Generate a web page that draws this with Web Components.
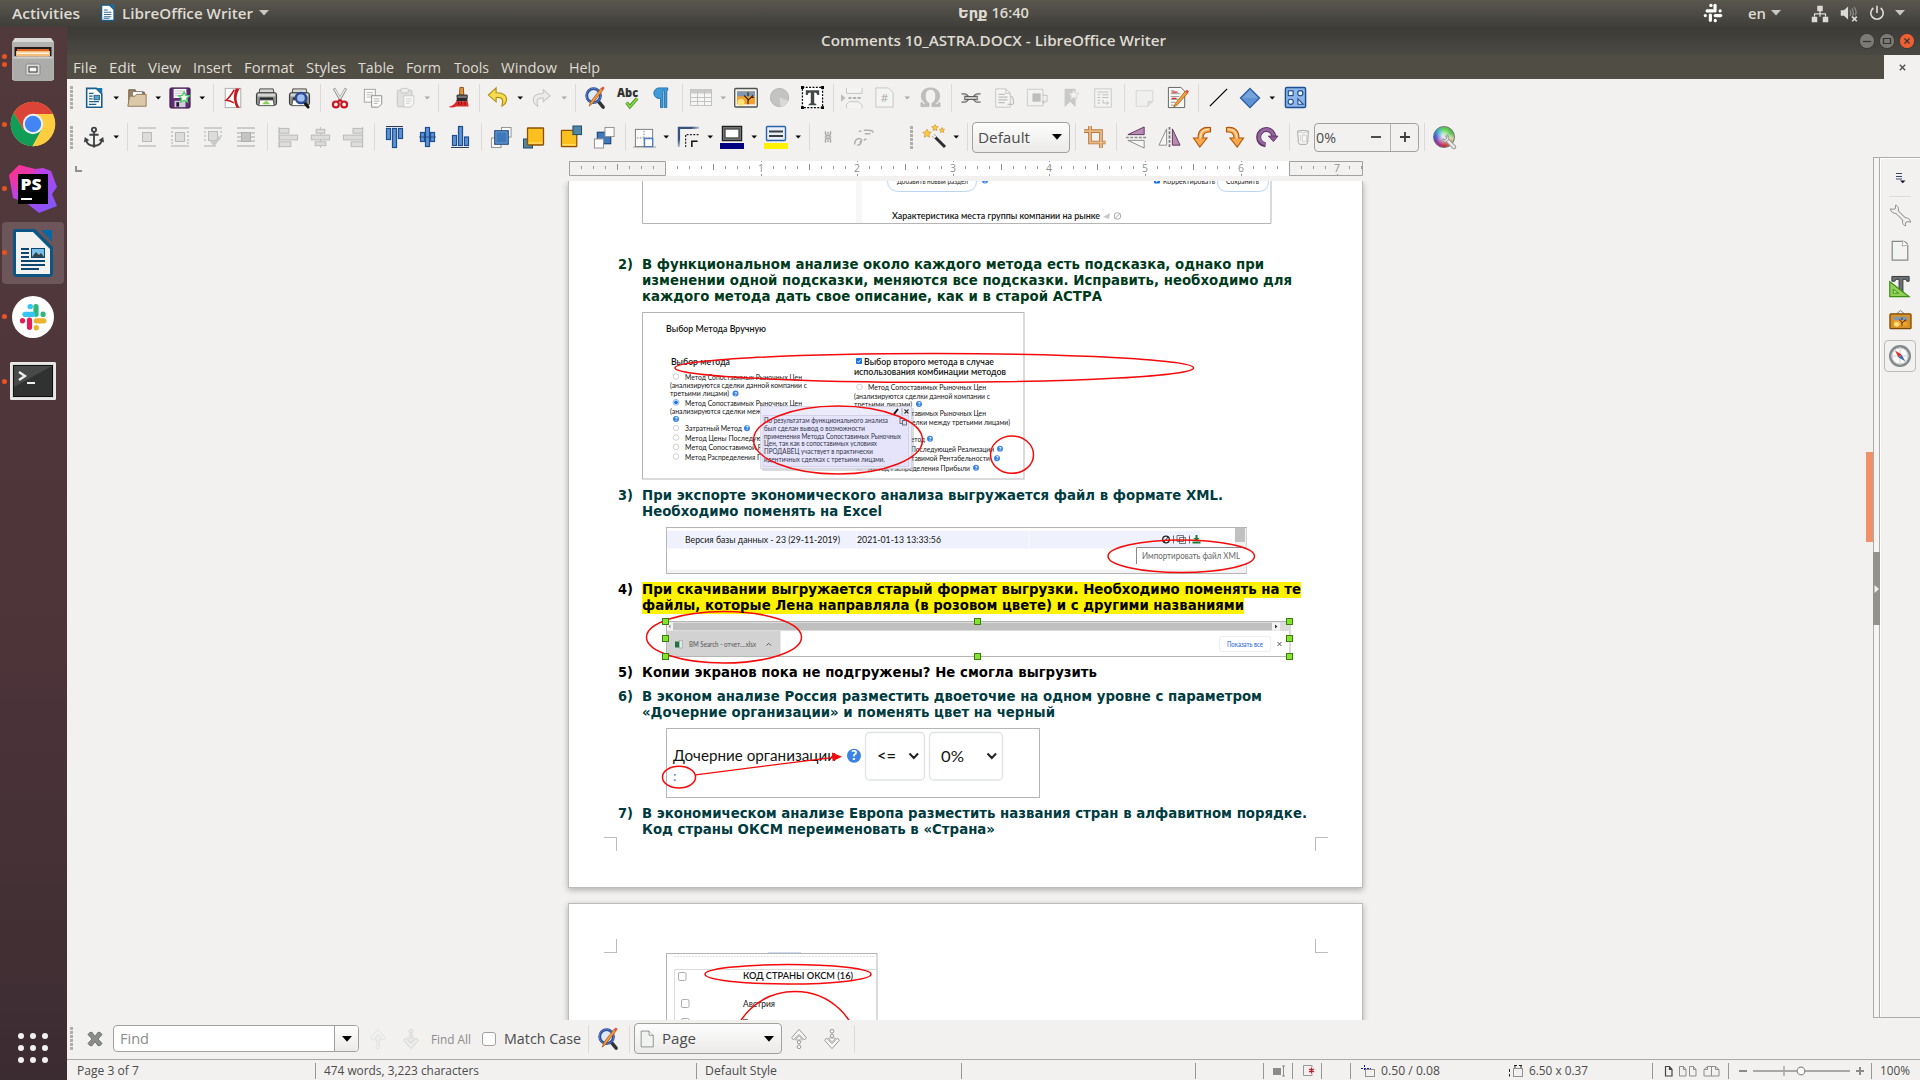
<!DOCTYPE html>
<html lang="en">
<head>
<meta charset="utf-8">
<title>Comments 10_ASTRA.DOCX - LibreOffice Writer</title>
<style>
html,body{margin:0;height:100%;overflow:hidden;background:#f2f1f0;font-family:"Open Sans","Noto Sans",sans-serif}
</style>
</head>
<body>
<desktop-shell></desktop-shell>
<script>
/* ---------- helpers ---------- */
// Lays items [start, width, markup] out in a flex row, turning starts into gaps.
const row = (items, origin = 0) => {
  let p = origin, o = '';
  for (const [x, w, html] of items) {
    o += `<div class="c" style="margin-left:${(x - p).toFixed(1)}px;width:${w}px">${html}</div>`;
    p = x + w;
  }
  return o;
};
const ROW = `.row{display:flex;align-items:center}.c{flex:none;display:flex;align-items:center;justify-content:center}`;
const txt = (x1, x2, s, style = '') => [x1, x2 - x1, `<fit-text w="${x2 - x1}" style="${style}">${s}</fit-text>`];
const ic = (cx, name, s = 24) => [cx - s / 2, s, `<ui-icon name="${name}" size="${s}"></ui-icon>`];
const sep = (x, h = 28, c = '#dcdad8') => [x, 1, `<i style="display:block;width:1px;height:${h}px;background:${c}"></i>`];
const dd = (cx, c = '#000') => [cx - 4, 8, `<svg width="8" height="6"><path d="M1.500 1.500h5.500L4.200 4.600z" fill="${c}"/></svg>`];
const handle = cx => [cx - 1.5, 3, `<i style="display:block;width:3px;height:23px;background:repeating-linear-gradient(#b0aeac 0 3px,transparent 3px 4px)"></i>`];
const T = (x1, x2, cy, s, size, extra = '') =>
  `<text x="${x1}" y="${(cy + size * .34).toFixed(1)}" font-size="${size}" textLength="${x2 - x1}" lengthAdjust="spacingAndGlyphs" ${extra}>${s}</text>`;
const E = (x1, x2, y1, y2) =>
  `<ellipse cx="${(x1 + x2) / 2}" cy="${(y1 + y2) / 2}" rx="${(x2 - x1) / 2}" ry="${(y2 - y1) / 2}" fill="none" stroke="#f50b0b" stroke-width="1.500"/>`;
const Q = (x, y, r = 3) =>
  `<circle cx="${x}" cy="${y}" r="${r}" fill="#3a82e4"/><text x="${x}" y="${y + r * .68}" font-size="${r * 1.9}" font-weight="900" fill="#fff" text-anchor="middle">?</text>`;
const R = (x, y, on) => on
  ? `<circle cx="${x}" cy="${y}" r="2.9" fill="#fff" stroke="#5b9df5" stroke-width=".7"/><circle cx="${x}" cy="${y}" r="1.9" fill="#1a73e8"/>`
  : `<circle cx="${x}" cy="${y}" r="2.8" fill="#fff" stroke="#bbb" stroke-width=".7"/>`;
const CB = (x, y) => `<rect x="${x - 3}" y="${y - 3}" width="6" height="6" rx="1" fill="#1573e6"/><path d="M${x - 1.7} ${y}l1.3 1.4 2.2-2.8" stroke="#fff" stroke-width=".9" fill="none"/>`;

/* ---------- icon set, 24 unit grid ---------- */
const magnify = `<path d="M15 16l5 6" stroke="#333" stroke-width="3.6" stroke-linecap="round"/><circle cx="10" cy="10" r="7.2" fill="#dfe8f5" stroke="#2b4c96" stroke-width="3"/><circle cx="10" cy="10" r="7.6" fill="none" stroke="#5c80c8" stroke-width="1"/><path d="M20 4L9 18l-3.6 3L7 16.400L17.600 2.500z" fill="#f29a3c" stroke="#a9530f" stroke-width=".8"/><path d="M17.600 2.500L20 4l1.600-2-2-1.600z" fill="#e34b3b"/>`;
const printer = `<path d="M5 3h14l1 6H4z" fill="#d6d7d4" stroke="#4a4d4a"/><rect x="1.500" y="7" width="21" height="13" rx="2" fill="#8d918d" stroke="#2e312f"/><rect x="3" y="8" width="18" height="3" fill="#d4d6d3"/><path d="M5 12h14v3H5z" fill="#2b2d2c"/><path d="M5 14.500h14l1 6H4z" fill="#fbfbfa" stroke="#555"/>`;
const blueg = `fill="#5d93d6" stroke="#1d4f92" stroke-width="1.200"`;
const gy = `fill="#dcdcda" stroke="#b9b9b7"`;
const teal = (x, y) => `<rect x="${x}" y="${y}" width="9" height="9" fill="#4f86a6" stroke="#1d4a66"/>`;
const orange = (x, y) => `<rect x="${x}" y="${y}" width="16" height="17" rx=".5" fill="#fcbf20" stroke="#8c5204" stroke-width="1.300"/><path d="M${x + 1.200} ${y + 15}h13.600" stroke="#ffe680"/>`;
const bluesq = `<rect x="5" y="5" width="14" height="14" fill="#3f79bb" stroke="#1c4476" stroke-width="1.200"/><rect x="6.200" y="6.200" width="11.600" height="11.600" fill="none" stroke="#79a7da" stroke-width=".8"/>`;
const white = (x, y, s = 9) => `<rect x="${x}" y="${y}" width="${s}" height="${s}" fill="#fafafa" stroke="#8f918e"/>`;
const pageG = `<path d="M4 2h11l5 5v15H4z" fill="#f4f4f2" stroke="#c4c4c1"/><path d="M15 2v5h5" fill="none" stroke="#c4c4c1"/>`;
const rot = `<path d="M20.500 2.500c-8.500-1-12.500 3-12.500 10.500H3.500L9.800 22 17 13h-4c0-4 1.800-6.500 7.500-6z" fill="#f9a94c" stroke="#b0560b" stroke-width="1.100"/><path d="M19 4.400c-5-.5-8.500 2-8.900 9" fill="none" stroke="#ffe2bd" stroke-width="1.300"/>`;
const photo = `<rect x="3" y="5" width="18" height="13" fill="#f4a12c"/><rect x="3" y="5" width="18" height="5" fill="#7f97b1"/><circle cx="7" cy="16" r="3.500" fill="#ffe37a"/><path d="M14 18v-5l-4-4m4 5l5-5m-5 1V6m3 5l3 0" stroke="#3a2409" stroke-width="1.200" fill="none"/>`;
const nav = (up, c, f) => `<g stroke="${c}" fill="${f}" ${up ? '' : 'transform="rotate(180 12 12)"'}><path d="M12 1.500l8 9-2 2.500-6-6-6 6-2-2.500z"/><path d="M12 8.500l4 4.500-4 0-4 0z" opacity=".7"/><circle cx="12" cy="15.500" r="1.800"/><circle cx="12" cy="20.500" r="2"/></g>`;
const slack = (a, b, c, d) => `<g stroke-width="5.200" stroke-linecap="round"><path d="M20.500 9.500v7.800" stroke="${b}"/><path d="M27.600 17.400v-.3" stroke="${b}"/><path d="M17.300 17.300H9.500" stroke="${a}"/><path d="M14.600 9.600h.3" stroke="${a}"/><path d="M14 23v7.300" stroke="${c}"/><path d="M7 23.600v.2" stroke="${c}"/><path d="M20.800 23.800h7.600" stroke="${d}"/><path d="M20.800 30.500v.3" stroke="${d}"/></g>`;
const ICONS = {
newdoc: `<path d="M4 1.500h10.500l6 6V22H4z" fill="#fff" stroke="#1a5e8e" stroke-width="1.700"/><path d="M15 1h6v6z" fill="#1573ae"/><path d="M6.500 7h5M6.500 10h4M6.500 13h4M6.500 16h11M6.500 19h8" stroke="#1d5f8f" stroke-width="1.200"/><rect x="12" y="9" width="6" height="5" fill="#4f9fd0" stroke="#15486e" stroke-width=".8"/>`,
folder: `<path d="M3 20V3h7l1.500 2.500H20V20z" fill="#a08460" stroke="#6e583b"/><path d="M7 5h11v6H7z" fill="#fff" stroke="#777"/><path d="M2 21l2-11h6l1.500-2H22v13z" fill="#dcc8a8" stroke="#8d7554"/>`,
save: `<rect x="1" y="1" width="22" height="22" rx="1.500" fill="#5d2c72" stroke="#32103f"/><path d="M5 2h14v10H5z" fill="#f4f4f4"/><path d="M6.500 4.500h11M6.500 7h11M6.500 9.500h6" stroke="#c9c9c9"/><path d="M6 15h12v7H6z" fill="#cfcfd3"/><path d="M8 16.500h3v5H8z" fill="#2f1440"/><path d="M16.500 5.500l1.800 3.600 4 .4-2.900 2.900.8 4-3.700-1.900-3.700 1.900.8-4-2.900-2.900 4-.4z" fill="#f2fff0" stroke="#53c96d" stroke-width="1.500"/>`,
pdf: `<rect x="3.500" y="1.500" width="17" height="21" fill="#fdfdfd" stroke="#a9a9a9"/><path d="M15 1.500h4.500C15 8 14.500 16 19.500 22.500H16C12.500 17 12 8 15 1.500z" fill="#c8171f"/><path d="M13.500 3C10.500 8 7.500 12 4.500 14.500c3.500 0 6 1 8.500 3" fill="none" stroke="#c8171f" stroke-width="1.600"/>`,
print: printer + `<path d="M8 18l4-2.500 4 3.500H8z" fill="#8bcf5c"/>`,
preview: printer + `<path d="M17 17l4 5" stroke="#111" stroke-width="3" stroke-linecap="round"/><circle cx="13.500" cy="12.500" r="5.300" fill="#9fc0ee" stroke="#2b4c96" stroke-width="2.600"/>`,
cut: `<path d="M5.500 1.500l8 14M18.500 1.500l-8 14" stroke="#8f9290" stroke-width="3"/><path d="M6 2l7 12M18 2l-7 12" stroke="#e7e9e8" stroke-width="1.400"/><circle cx="7.500" cy="19" r="3.200" fill="none" stroke="#cc1420" stroke-width="2.300"/><circle cx="16.500" cy="19" r="3.200" fill="none" stroke="#cc1420" stroke-width="2.300"/><path d="M10 16l2-2 2 2" stroke="#cc1420" stroke-width="2" fill="none"/>`,
copy: `<rect x="2.500" y="2.500" width="12" height="14" fill="#fafafa" stroke="#9d9f9c"/><path d="M5 6h7M5 8.500h7M5 11h5" stroke="#b9b9b9"/><path d="M10.500 9.500h11v9l-3.500 3.500h-7.500z" fill="#fafafa" stroke="#888a87"/><path d="M13 13h6M13 15.500h6M13 18h4" stroke="#b0b0b0"/>`,
paste: `<g opacity=".85"><rect x="2.500" y="3.500" width="16" height="18" rx="1.500" fill="#dededb" stroke="#bababa"/><rect x="6.500" y="1.500" width="8" height="5" rx="1" fill="#eee" stroke="#bdbdbb"/><path d="M9.500 9.500h11v9L17 22H9.500z" fill="#f7f7f5" stroke="#c2c2c0"/><path d="M12 13h6M12 15.500h6M12 18h4" stroke="#ccc"/></g>`,
brush: `<path d="M12.500 1.500h3.500l.5 8h-4.500z" fill="#e3973f" stroke="#8f4e10"/><path d="M9.500 9.500h10.500v3.500H9.500z" fill="#777" stroke="#222"/><path d="M9.500 13h10.500l.5 3h-12z" fill="#2b2b2b"/><path d="M8.500 16h12l1 5.500H9c-3 1-6 1.200-8.500.5 4-1 6.800-3 8-6z" fill="#dc2a2c"/><path d="M11 16l.5 4M14 16v4M17.500 16l.5 4" stroke="#7d0e12"/>`,
undo: `<path d="M9.500 2L1.500 9.500l8 7V12c5-.5 8 1 6.500 6.500-.3 1.500-.3 2.500-.3 2.500 6.500-4 7.800-14-6.200-14z" fill="#f5dc50" stroke="#b08f10" stroke-width="1.200"/>`,
redo: `<path d="M14.500 3l7.500 6.500-7.500 6.500V12c-5-.5-8 1-6.500 6.500.3 1.500.3 2.500.3 2.500C1.800 17 .5 7 14.500 7z" fill="#ebebe9" stroke="#c6c6c4" stroke-width="1.100"/>`,
find: magnify,
spell: `<text x="0" y="10.500" font-size="12.500" font-weight="800" textLength="23" lengthAdjust="spacingAndGlyphs" fill="#333" font-family="Open Sans">Abc</text><path d="M10.500 17l3.500 4.500 8-9" stroke="#3d8f14" stroke-width="3.600" fill="none"/><path d="M10.500 17l3.500 4.500 8-9" stroke="#8fdc4c" stroke-width="1.800" fill="none"/>`,
pilcrow: `<path d="M18.500 2H9.500a5.500 5.500 0 0 0 0 11H11v9.500h2.500V4.500H15v18h2.500V4.500h1z" fill="#3f9ad8" stroke="#1b6aa8" stroke-width=".9"/>`,
table: `<rect x="1.500" y="3.500" width="21" height="16" fill="#f6f6f5" stroke="#c3c3c1"/><path d="M2 5.500h20" stroke="#cacac8" stroke-width="4"/><path d="M1.500 11.500h21M1.500 15.500h21M8.500 4v15M15.500 4v15" stroke="#c3c3c1"/>`,
image: `<rect x=".7" y="2.500" width="22.600" height="18.500" rx="1" fill="#f4f4f0" stroke="#4f524f" stroke-width="1.300"/><g transform="translate(0 .3)">${photo}</g>`,
pie: `<circle cx="12" cy="12" r="9.500" fill="#c3c3c1" stroke="#b4b4b2"/><path d="M12 12l9 3.500A9.500 9.500 0 0 1 13 21.500z" fill="#d9d9d7"/>`,
textbox: `<rect x="1.500" y="1.500" width="21" height="21" fill="#fff" stroke="#000" stroke-width="1.300" stroke-dasharray="2 1.500"/><path d="M0 0h3v3H0zM21 0h3v3h-3zM0 21h3v3H0zM21 21h3v3h-3z"/><path d="M5 4.500h14v5h-2c-.5-2-1-2.700-3.200-2.700V18l2.200.8V20H8v-1.200l2.200-.8V6.800C8 6.800 7.500 7.500 7 9.500H5z" fill="#454849"/>`,
pbreak: `<path d="M6 1v6h17V1M6 23v-4l3-3h10l4 4v3" fill="#f4f4f2" stroke="#c2c2c0"/><path d="M8 12h15" stroke="#b3b3b1" stroke-width="2" stroke-dasharray="3.500 1.500"/><path d="M0 8l5 4-5 4z" fill="#bcbcba"/>`,
field: `<path d="M3 2h13l5 5v15H3z" fill="#f4f4f2" stroke="#c6c6c4"/><text x="12" y="17" font-size="12" text-anchor="middle" fill="#a7a7a5">#</text>`,
omega: `<path d="M2 21.500v-4h1.500c.3 1.300 1 1.500 2.500 1.500h2C4 16.500 2.500 14 2.500 10.500 2.500 5 6.500 2 12 2s9.500 3 9.500 8.500C21.500 14 20 16.500 16 19h2c1.500 0 2.200-.2 2.500-1.500H22v4h-8.500V18c3-1.500 4-4 4-7.500 0-4-2-7-5.500-7s-5.500 3-5.500 7c0 3.500 1 6 4 7.500v3.500z" fill="#bebebc" stroke="#adadab" stroke-width=".6"/>`,
link: `<path d="M1.500 7.500h4c2 0 3 2 5 4.500M1.500 16.500h4c2 0 3-2 5-4.500M22.500 7.500h-4c-2 0-3 2-5 4.500M22.500 16.500h-4c-2 0-3-2-5-4.500" stroke="#696b68" stroke-width="1.500" fill="none"/><path d="M4 10h5M15 10h5M4 14h5M15 14h5" stroke="#7d7f7c"/><rect x="5" y="10.500" width="14" height="3" rx="1.500" fill="#eee" stroke="#5c5e5b" stroke-width="1.100"/>`,
foot: pageG + `<path d="M7 8h7M7 11h10M7 14h10M7 17h7M17 19h4.500q2.500 0 2-3-.5-6-3.500-6" stroke="#bdbdbb" stroke-width="1.300" fill="none"/>`,
frame: `<path d="M1.500 2.500h17v18h-17z" fill="#f2f2f0" stroke="#c8c8c6"/><rect x="7" y="7" width="9" height="9" fill="#bdbdbb"/><path d="M18 9h5v7l-5 .5m2-2.500l-2 2.500 2 2" stroke="#bdbdbb" fill="none"/>`,
bookmark: `<path d="M5 2h12v20l-6-6-6 6z" fill="#c9c9c7"/><path d="M15 3l1.700 3.500 3.800.5-2.800 2.600.7 3.800-3.400-1.900-3.400 1.900.7-3.800L9.500 7l3.800-.5z" fill="#f1f1ef" stroke="#d4d4d2"/>`,
cross: `<rect x="3" y="2" width="18" height="20" fill="#f3f3f1" stroke="#c9c9c7"/><path d="M6 5.500h12M6 8.500h3M11 8.500h7M6 11.500h3M11 11.500h7M6 14.500h3M6 17.500h3M12 14v3.500h6m-2-2l2 2-2 2" stroke="#bababa" fill="none"/>`,
comment: `<path d="M3.500 4h18v12l-5 5h-13z" fill="#f0f0ee" stroke="#d5d5d3"/><path d="M21.500 16h-5v5" fill="#e0e0de" stroke="#cfcfcd"/>`,
track: `<path d="M2.500 1.500h13l4 4v17h-17z" fill="#f8f8f7" stroke="#5f625f"/><path d="M5 5h4M5 8h10M5 11h9M5 14h8M5 17h5M5 20h4" stroke="#9a9c99"/><path d="M6 6.500h6M6 13h5" stroke="#e2262b" stroke-width="1.300"/><path d="M20 5.500L10 18l-2 4 4-2.500L22.500 7.500z" fill="#f4a13c" stroke="#a35a10" stroke-width=".8"/><path d="M20 5.500l2.500 2L24 5.800l-2.300-2z" fill="#e34b3b"/>`,
line: `<path d="M3 21L21 3" stroke="#000" stroke-width="1.200"/>`,
diamond: `<path d="M12 1.500L22.500 12 12 22.500 1.500 12z" fill="#5f92d2" stroke="#24579c" stroke-width="1.200"/><path d="M12 3.500L20.500 12H3.500z" fill="#86afe0" opacity=".6"/>`,
shapes: `<rect x="1.500" y="1.500" width="21" height="21" rx="1.500" fill="#8fb6e6" stroke="#1f4f92" stroke-width="1.500"/><g fill="#e8f1fc" stroke="#1f4f92" stroke-width="1.200"><rect x="4.500" y="5" width="5" height="5"/><circle cx="17" cy="7.500" r="2.700"/><circle cx="7" cy="16.500" r="2.700"/><path d="M14.500 13.500v5.500h5.500z"/></g>`,
anchor: `<g fill="none" stroke="#3d4142" stroke-width="2"><circle cx="12" cy="4" r="2.300"/><path d="M12 6.500v15M7 9.500h10M3.500 14.500c.5 5 4 7 8.500 7s8-2 8.500-7"/></g><path d="M1 18l1-6 5 3.500zM23 18l-1-6-5 3.500zM9.500 21.500h5L12 24z" fill="#3d4142"/>`,
wrap0: `<path d="M3 3h18M3 21h18" stroke="#c2c2c0" stroke-width="1.600"/><rect x="7.500" y="7.500" width="9" height="9" ${gy}/>`,
wrap1: `<path d="M3 3h18M3 21h18" stroke="#c2c2c0" stroke-width="1.600"/><path d="M3 7h2M3 11h2M3 15h2M3 18h2M19 7h2M19 11h2M19 15h2M19 18h2" stroke="#c2c2c0" stroke-width="1.500"/><rect x="7.500" y="7.500" width="9" height="9" ${gy}/>`,
wrap2: `<path d="M3 3h18M3 21h12" stroke="#c2c2c0" stroke-width="1.600"/><path d="M3 7h2M3 11h2M3 15h2M19 7h2M19 11h2" stroke="#c2c2c0" stroke-width="1.500"/><rect x="7.500" y="6.500" width="9" height="9" ${gy}/><path d="M10 15l3 4 6-7" stroke="#c9c9c7" stroke-width="3" fill="none"/>`,
wrap3: `<path d="M3 3h18M3 8h18M3 12h18M3 16h18M3 21h18" stroke="#bfbfbd" stroke-width="1.600"/><rect x="7.500" y="7.500" width="9" height="9" fill="#c4c4c2" stroke="#b0b0ae"/>`,
al: `<path d="M3 1v22" stroke="#c2c2c0"/><rect x="3.500" y="2.500" width="10" height="5" ${gy}/><rect x="3.500" y="9.500" width="19" height="5" ${gy}/><rect x="3.500" y="16.500" width="12" height="5" ${gy}/>`,
ac: `<path d="M12 1v22" stroke="#c2c2c0"/><rect x="7.500" y="3.500" width="9" height="4" ${gy}/><rect x="2.500" y="9.500" width="19" height="5" ${gy}/><rect x="6.500" y="16.500" width="11" height="4" ${gy}/>`,
ar: `<path d="M21.500 1v22" stroke="#c2c2c0"/><rect x="11.500" y="2.500" width="10" height="5" ${gy}/><rect x="1.500" y="9.500" width="20" height="5" ${gy}/><rect x="9.500" y="16.500" width="12" height="5" ${gy}/>`,
vt: `<path d="M4 1.500h17" stroke="#2c3f5c"/><rect x="4.500" y="3.500" width="4" height="11" ${blueg}/><rect x="10.500" y="3.500" width="4" height="19" ${blueg}/><rect x="16.500" y="3.500" width="4" height="10" ${blueg}/>`,
vm: `<rect x="5.500" y="7.500" width="4" height="9" ${blueg}/><rect x="10.500" y="2.500" width="4" height="19" ${blueg}/><rect x="15.500" y="7.500" width="4" height="9" ${blueg}/><path d="M4 12h17" stroke="#1d3c6a" opacity=".7"/>`,
vb: `<path d="M3 22.500h18" stroke="#2c3f5c"/><rect x="4.500" y="10.500" width="4" height="10" ${blueg}/><rect x="10.500" y="1.500" width="4" height="19" ${blueg}/><rect x="16.500" y="12" width="4" height="8.500" ${blueg}/>`,
z1: white(12, 1.5, 10) + white(1.5, 12.5, 10) + bluesq,
z2: teal(1.5, 14) + orange(5.5, 3),
z3: orange(1.5, 4.500) + teal(13.5, 0),
z4: `<rect x="4.500" y="6.500" width="14" height="12" fill="#3f79bb" stroke="#1c4476" stroke-width="1.200"/>` + white(12.5, 1.5, 9.500) + white(1.5, 13.5, 9.500),
border: `<path d="M0 22h24" stroke="#c9c9c9" stroke-width="2"/><rect x="2.500" y="3.500" width="18" height="18" fill="#fbfbfb" stroke="#7b7d7a"/><path d="M11.500 5v16M4 12.500h16" stroke="#777" stroke-dasharray="1.500 1.500"/><path d="M12 13h8.500v8.500H12z" fill="#fff" stroke="#4f7fc0" stroke-width="1.400"/>`,
lstyle: `<defs><linearGradient id="f" x1="0" y1="0" x2="1" y2="1"><stop offset=".3" stop-color="#35537d"/><stop offset=".55" stop-color="#35537d" stop-opacity=".1"/></linearGradient></defs><path d="M2 22V2h21" stroke="url(#f)" stroke-width="2.400" fill="none"/><path d="M9 22V9h14" stroke="#222" stroke-width="1.300" stroke-dasharray="2 1.500" fill="none"/><path d="M15.500 22v-6h6" stroke="#111" stroke-width="1.600" fill="none"/>`,
lcolor: `<rect x="2.500" y="1.500" width="19" height="14" fill="#fafafa" stroke="#1f2121" stroke-width="1.500"/><rect x="4.500" y="3.500" width="15" height="10" fill="#fff" stroke="#575a59" stroke-width="2.500"/><rect x="0" y="18" width="24" height="6" fill="#000080"/>`,
bg: `<rect x="2.500" y="1.500" width="19" height="14" rx="1" fill="#e6effa" stroke="#2c62a8" stroke-width="1.400"/><path d="M5 6.500h14M5 11h14" stroke="#3c3f40" stroke-width="2.200"/><rect x="0" y="18" width="24" height="6" fill="#fff200"/>`,
unlink: `<path d="M9 5v3.500q0 2 3 2t3-2V5M9 19v-3.500q0-2 3-2t3 2V19M12 6v3M12 15v3M8 12h2.500M13.500 12H16" stroke="#a9a9a7" stroke-width="1.700" fill="none"/>`,
unlink2: `<path d="M2 21q0-6 4-7t4 3-5 5M8 19l3-4M13 4h6q5 0 5 3M14 8h7M7 5h3M13 16l3-2" stroke="#b0b0ae" stroke-width="1.800" fill="none"/>`,
wand: `<path d="M10 10l12 12" stroke="#2b2d2e" stroke-width="3"/><path d="M9.500 9.500l3 3" stroke="#eee" stroke-width="2.500"/><g fill="#fbc84a" stroke="#c98b14" stroke-width=".6"><path d="M4 4l1.300 2.800 3 .4L6 9.300l.6 3L4 10.800 1.300 12.300l.6-3L-.2 7.200l3-.4z"/><path d="M12 -.5l1 2 2.300.3-1.700 1.600.4 2.300-2-1.100-2 1.100.4-2.300L8.700 1.800l2.300-.3z"/><path d="M19 2.500l.8 1.600 1.800.3-1.300 1.300.3 1.800-1.600-.9-1.600.9.3-1.800-1.300-1.300 1.800-.3z"/></g>`,
crop: `<path d="M6.500 0v18h17M0 5.500h18.500V24" stroke="#b9783c" stroke-width="4" fill="none"/><path d="M6.500 0v18h17M0 5.500h18.500V24" stroke="#eab987" stroke-width="2" fill="none"/>`,
flipv: `<path d="M20 1v8L3 9z" fill="#b98ab4" stroke="#5d355c"/><path d="M1 12h22" stroke="#8b8d8a" stroke-width="1.800" stroke-dasharray="3 1.500"/><path d="M20 23v-8L3 15z" fill="#f6f6f6" stroke="#8b8d8a"/>`,
fliph: `<path d="M1 20h8V3z" fill="#f6f6f6" stroke="#8b8d8a"/><path d="M12 1v22" stroke="#777" stroke-width="1.800" stroke-dasharray="3 1.500"/><path d="M23 20h-8V3z" fill="#b98ab4" stroke="#5d355c"/>`,
rotl: rot, rotr: `<g transform="translate(24 0) scale(-1 1)">${rot}</g>`,
rotf: `<path d="M10.500 20.500A8.300 8.300 0 1 1 19.500 12" stroke="#5b3566" stroke-width="5.500" fill="none"/><path d="M10.200 19.800A8 8 0 1 1 19.300 12" stroke="#96659f" stroke-width="3.300" fill="none"/><path d="M13.500 11h10.500l-5 6z" fill="#8a5a94" stroke="#5b3566"/>`,
transp: `<path d="M4 3q8-1.500 16 0l-1 17q-.5 3-3 3H8q-2.500 0-3-3z" fill="#f7f7f6" stroke="#8a8c89" stroke-width="1.100"/><path d="M4.500 4q7.500 4 15 0M8 9v9M11 9h6v10h-6z" fill="none" stroke="#bdbdbb"/>`,
wheel: `<foreignObject x="1" y="1" width="22" height="22"><div xmlns="http://www.w3.org/1999/xhtml" style="width:20px;height:20px;border-radius:50%;border:1px solid #6c6f75;background:radial-gradient(#fff 0,transparent 60%),conic-gradient(#5fd04a,#4fc04a 60deg,#cfd8a0 100deg,#c33 170deg,#b22d86 210deg,#4a4fd0 270deg,#39b7c9 320deg,#5fd04a)"></div></foreignObject><path d="M13 13l9 9" stroke="#8b8d8a" stroke-width="4.500" stroke-linecap="round"/><path d="M12 12l10 10" stroke="#e6e7e5" stroke-width="2.800" stroke-linecap="round"/><path d="M9.500 15a4 4 0 1 0 5.500-5.500l0 3.500-2 2z" fill="#e6e7e5" stroke="#8b8d8a" stroke-width=".8"/>`,
closex: `<path d="M2.500 6q3-4 5.500-3l4 5.500L16 3q2.500-1 5.500 3L16 12l5.500 6q-3 4-5.500 3l-4-5.500L8 21q-2.500 1-5.500-3L8 12z" fill="#8a8c89" stroke="#5f615e"/>`,
navup: nav(1, '#8f918e', '#f7f7f6'), navdn: nav(0, '#8f918e', '#f7f7f6'),
navupg: nav(1, '#dededc', '#f2f2f0'), navdng: nav(0, '#d2d2d0', '#ededeb'),
page: `<path d="M5 2.500h9.500l5 5v14H5z" fill="#f1f3f1" stroke="#7f827e"/><path d="M14.500 2.500v5h5" fill="#fff" stroke="#7f827e"/>`,
side0: `<path d="M8 8.500h6M8 11.500h6M8 14h6" stroke="#3a4866" stroke-width="1.200"/><path d="M12 15.500h5.500l-2.700 2.800z" fill="#0d1526"/>`,
wrench: `<path d="M6.500 6.500l11 11" stroke="#8b8d8a" stroke-width="4.600"/><path d="M1.500 5A5 5 0 0 0 8 9.500 5 5 0 0 0 7 1L6.500 5 4 5.500zM22.500 19a5 5 0 0 0-6.500-4.500A5 5 0 0 0 17 23l.5-4 2.500-.5z" fill="#eeeeec" stroke="#8b8d8a"/><path d="M7 7l10.500 10.500" stroke="#eeeeec" stroke-width="2.800"/>`,
page2: `<path d="M3.500 1.500h12q5 1 5 6v14.500h-17z" fill="#f3f4f2" stroke="#868985" stroke-width="1.300"/><path d="M14 2q.5 5-1 6 6-1 7.500 0" fill="#fff" stroke="#a3a5a2" transform="translate(1 -1.500)"/>`,
styles: `<path d="M3 1.500h18v5h-2.500l-.8-2H14.500V18h-4V4.500H7l-.8 2H3z" fill="#6c7073" stroke="#33373a"/><path d="M.8 7v15.500H21z" fill="#8fd257" stroke="#3c8a10" stroke-width="1.200"/><path d="M4.500 15v4H10z" fill="#d6f0bd" stroke="#3c8a10"/>`,
gallery: `<path d="M8 5l4-3.500L16 5" stroke="#777" fill="none"/><rect x="1" y="5" width="22" height="15.500" rx="1" fill="#d59127" stroke="#7b4a07" stroke-width="1.300"/><g transform="translate(2.500 4.500) scale(.79 .72)">${photo}</g>`,
compass: `<circle cx="12" cy="12" r="9.800" fill="#fbfbfa" stroke="#83888a" stroke-width="2.400"/><circle cx="12" cy="12" r="8" fill="none" stroke="#c3c7c8"/><path d="M12 5v14M5 12h14" stroke="#d0d4d6"/><path d="M7 6.500l6.500 4-3 3z" fill="#e02e2e"/><path d="M17.500 17.500l-7-4 3-3z" fill="#4a6ea8"/>`,
files: `<path d="M3 6L6 2h36l3 4v38H3z" fill="#b2b2b1"/><path d="M6 2h36l2.500 4h-41z" fill="#dadad9"/><path d="M5.500 11h37v12h-37z" fill="#231a17"/><path d="M8 13h32v8H8z" fill="#d9662a"/><path d="M7 15h34v5H7z" fill="#f3bd7c"/><path d="M8 16.500h32v1.500H8z" fill="#fdf3e2"/><path d="M4.500 20.500h39V45h-39z" fill="#acacab"/><path d="M4.500 20.500h39v2h-39z" fill="#cfcfce"/><rect x="17" y="28" width="14" height="11" rx="1.500" fill="#d9d9d8" stroke="#8a8a89"/><rect x="20" y="31" width="8" height="5" fill="#f6f6f6" stroke="#333"/>`,
chrome: `<circle cx="24" cy="24" r="22.300" fill="#ffcd40"/><path d="M4.700 12.900A22.300 22.300 0 0 1 43.300 12.900L43.500 14H24L14.500 29.500z" fill="#db4437"/><path d="M4.700 12.900A22.300 22.300 0 0 0 23.500 46.300l9.200-17L24 34 14.500 29.500z" fill="#0f9d58"/><path d="M24 14h19.500A22.300 22.300 0 0 1 23.500 46.300l9.500-17z" fill="#ffcd40"/><circle cx="24" cy="24" r="10.200" fill="#f1f1f1"/><circle cx="24" cy="24" r="8.200" fill="#4285f4"/>`,
phpstorm: `<defs><linearGradient id="a" x1="0" y1="0" x2="1" y2="1"><stop offset="0" stop-color="#ff318c"/><stop offset=".45" stop-color="#b345f1"/><stop offset="1" stop-color="#765af8"/></linearGradient></defs><path d="M0 10L10 0l16 4 8-1 8 3 6 16-5 7 5 12-18 7-10-8-8-4-8-3z" fill="url(#a)"/><path d="M0 10L10 0l16 4-6 12-12 10z" fill="#ff318c" opacity=".5"/><rect x="9" y="9" width="30" height="30" fill="#000"/><text x="11.500" y="24.500" font-size="16" font-weight="800" font-family="Open Sans" fill="#fff" textLength="21" lengthAdjust="spacingAndGlyphs">PS</text><path d="M12 34h11" stroke="#fff" stroke-width="2"/>`,
writer: `<path d="M6 0h20l18 18v26q0 4-4 4H8q-4 0-4-4V4q0-4 2-4z" fill="#0d5584"/><path d="M7 3h17l17 17v25H7z" fill="#f2f2f0"/><path d="M32 1h11v12z" fill="#0a67a6"/><path d="M12 20h8M12 24h8M12 28h8M12 32h24M12 36h24M12 40h18" stroke="#0b4770" stroke-width="2"/><rect x="22.500" y="19.500" width="13" height="9" fill="#79bfe8" stroke="#0b4770"/><path d="M23 28l4-5 3 3 2-2 3 4z" fill="#35424a"/>`,
slackapp: `<circle cx="24" cy="24" r="21" fill="#fff"/><g transform="translate(6.500 4)">${slack('#36c5f0', '#2eb67d', '#e01e5a', '#ecb22e')}</g>`,
slackw: `<g transform="scale(.72) translate(-1 -3.500)" fill="none">${slack('#fff', '#fff', '#fff', '#fff').replace('5.200', '4.400')}</g>`,
term: `<rect x="1" y="5" width="46" height="38" rx="1.500" fill="#d9d9d8"/><rect x="2" y="6" width="44" height="36" fill="none" stroke="#f6f6f5"/><rect x="4.500" y="8.500" width="39" height="31" fill="#303231" stroke="#111"/><path d="M5 9h38L5 30z" fill="#484a49"/><path d="M10 15l6 4-6 4" stroke="#eee" stroke-width="2.300" fill="none"/><path d="M18 26h8" stroke="#eee" stroke-width="2"/>`,
net: `<path d="M9 4h6v6H9zM3 16h6v6H3zM15 16h6v6h-6zM11.300 10h1.400v6h-1.400z" fill="#dcdad5"/><path d="M6 16v-3h12v3" stroke="#dcdad5" fill="none" stroke-width="1.300"/>`,
vol: `<path d="M3 9h3.500L11 5v14l-4.500-4H3z" fill="#dcdad5"/><path d="M13 9q2 3 0 6M15 7q3.500 5 0 10M17.500 5.500q4 5.500 1 9" stroke="#8e8c86" fill="none" stroke-width="1.400"/><path d="M15.500 16l5 5m0-5l-5 5" stroke="#dcdad5" stroke-width="1.800"/>`,
power: `<path d="M8 6.500a6.800 6.800 0 1 0 8 0M12 4v8" stroke="#dcdad5" stroke-width="1.800" fill="none"/>`
};
const boxOf = { files: 48, chrome: 48, phpstorm: 48, writer: 48, slackapp: 48, term: 48 };

/* ---------- base classes ---------- */
class Base extends HTMLElement {
  constructor() { super(); this.attachShadow({ mode: 'open' }); }
  connectedCallback() { this.shadowRoot.innerHTML = `<style>:host{display:block;box-sizing:border-box}${ROW}${this.css || ''}</style>${this.view()}`; }
}
const def = (n, css, view) => customElements.define(n, class extends Base { get css() { return css; } view() { return view.call(this); } });

customElements.define('fit-text', class extends HTMLElement {
  constructor() {
    super();
    this.attachShadow({ mode: 'open' }).innerHTML = `<style>:host{display:inline-block;white-space:nowrap;flex:none}span{display:inline-block;transform-origin:0 50%}</style><span><slot></slot></span>`;
  }
  connectedCallback() {
    const w = +this.getAttribute('w'), s = this.shadowRoot.querySelector('span');
    this.style.width = w + 'px';
    const n = s.getBoundingClientRect().width;
    if (n) s.style.transform = `scaleX(${w / n})`;
  }
});
def('ui-icon', `:host{flex:none;line-height:0}svg{overflow:visible}`, function () {
  const n = this.getAttribute('name'), s = +this.getAttribute('size') || 24, b = boxOf[n] || 24;
  return `<svg width="${s}" height="${s}" viewBox="0 0 ${b} ${b}">${ICONS[n] || ''}</svg>`;
});

/* ---------- shell ---------- */
def('desktop-shell', `:host{display:flex;flex-direction:column;width:1920px;height:1080px;overflow:hidden}.main{display:flex;flex:1;min-height:0}writer-window{flex:1;min-width:0}`,
  () => `<top-panel></top-panel><div class="main"><app-dock></app-dock><writer-window></writer-window></div>`);

const tri = (cx, w = 10) => [cx - w / 2, w, `<svg width="${w}" height="6"><path d="M0 0h${w}L${w / 2} 5.500z" fill="#c9c7c1"/></svg>`];
def('top-panel', `:host{height:27px;background:linear-gradient(#5a574f,#3f3e39);color:#dfdbd2;font-size:14px;font-weight:600}.row{height:26px}`,
  () => `<div class="row">${row([
    txt(12, 80, 'Activities'),
    [100, 16, `<svg width="16" height="18" viewBox="3 0 19 24"><g>${ICONS.newdoc.replace(/<rect.*$/, '').replace('M6.500 7h5M6.500 10h4M6.500 13h4M6.500 16h11', 'M7 8h5M7 11h10M7 14h10M7 17h10')}</g></svg>`],
    txt(122, 253, 'LibreOffice Writer'), tri(263.5),
    txt(958, 1029, 'Երք 16:40', 'font-family:\'Open Sans\',\'DejaVu Sans\';font-size:13.5px'),
    ic(1713, 'slackw'), txt(1748, 1766, 'en'), tri(1776), ic(1820, 'net', 22), ic(1849, 'vol', 22), ic(1877, 'power', 22), tri(1900)
  ])}</div>`);

def('app-dock', `:host{width:67px;flex:none;background:linear-gradient(#52393c,#4c3439 60%,#3f2e33 93%,#3b2c31);display:flex;flex-direction:column}
  dock-item{margin-top:2.200px}dock-item:first-child{margin-top:0}.grid{margin:auto 0 17px 18px;display:grid;grid-template-columns:repeat(3,6px);gap:6px}.grid i{width:6px;height:6px;border-radius:3px;background:#f2f1f0}`,
  () => `<dock-item name="files" dots="2"></dock-item><dock-item name="chrome" dots="1"></dock-item><dock-item name="phpstorm" dots="1"></dock-item><dock-item name="writer" dots="1" active></dock-item><dock-item name="slackapp" dots="1"></dock-item><dock-item name="term" dots="1"></dock-item><div class="grid">${'<i></i>'.repeat(9)}</div>`);
def('dock-item', `:host{width:62px;height:62px;margin-left:2px;border-radius:4px;display:flex;align-items:center}:host([active]){background:#6d5659}
  .d{width:5px;display:flex;flex-direction:column;gap:3px;align-items:center}.d i{width:5px;height:5px;border-radius:3px;background:#ea5420}ui-icon{margin-left:2px}`,
  function () { return `<div class="d">${'<i></i>'.repeat(+this.getAttribute('dots'))}</div><ui-icon name="${this.getAttribute('name')}" size="48"></ui-icon>`; });

def('writer-window', `:host{display:flex;flex-direction:column}.work{display:flex;height:863px;flex:none}.left{width:1799px;flex:none;display:flex;flex-direction:column}`,
  () => `<title-bar></title-bar><menu-bar></menu-bar><standard-toolbar></standard-toolbar><image-toolbar></image-toolbar>
   <div class="work"><div class="left"><doc-ruler></doc-ruler><doc-canvas></doc-canvas></div><side-deck></side-deck></div>
   <find-bar></find-bar><status-bar></status-bar>`);

const wbtn = (x, bg, p) => [x, 16, `<svg width="16" height="16"><circle cx="8" cy="8" r="7.600" fill="${bg}" stroke="#33322e" stroke-width=".8"/><path d="${p}" stroke="#34332f" fill="none" stroke-width="1.200"/></svg>`];
def('title-bar', `:host{height:28px;background:linear-gradient(#3c3b37,#4b4943);color:#dfdbd2;font-size:14px;font-weight:600}.row{height:27px}`,
  () => `<div class="row">${row([txt(821, 1166, 'Comments 10_ASTRA.DOCX - LibreOffice Writer'),
    wbtn(1859, '#7b7a75', 'M4 8.500h8'), wbtn(1879, '#7b7a75', 'M4.500 5.500h7v5h-7z'), wbtn(1899, '#ec5f35', 'M5.500 5.500l5 5m0-5l-5 5')], 67)}</div>`);
def('menu-bar', `:host{height:24px;background:#504d45;color:#dfdbd2;font-size:14px}.row{height:24px}.x{background:#f2f1f0;width:36px;height:24px;display:flex;align-items:center;justify-content:center}`,
  () => `<div class="row">${row([txt(73, 97, 'File'), txt(109, 136, 'Edit'), txt(148, 181, 'View'), txt(193, 232, 'Insert'), txt(244, 294, 'Format'), txt(306, 346, 'Styles'), txt(358, 394, 'Table'), txt(406, 441, 'Form'), txt(454, 489, 'Tools'), txt(501, 557, 'Window'), txt(569, 600, 'Help'),
    [1884, 36, `<div class="x"><svg width="7" height="7"><path d="M.8.8l5.400 5.400m0-5.400L.8 6.200" stroke="#4c4c4c" stroke-width="1.300"/></svg></div>`]], 67)}</div>`);

def('standard-toolbar', `:host{height:39px}.row{height:37px}`, () => `<div class="row">${row([
  handle(71), ic(94, 'newdoc', 22), dd(116), ic(137, 'folder', 22), dd(158), ic(180, 'save', 22), dd(202), sep(213), ic(233, 'pdf', 22), ic(266, 'print', 23), ic(299, 'preview', 23), sep(320), ic(340, 'cut', 22), ic(373, 'copy', 22), ic(406, 'paste', 22), dd(427, '#aaa'), sep(438), ic(459, 'brush', 23), sep(479), ic(498, 'undo', 23), dd(520), ic(541, 'redo', 22), dd(564, '#aaa'), sep(575), ic(595, 'find', 23), ic(628, 'spell', 22), ic(661, 'pilcrow', 23), sep(682), ic(701, 'table'), dd(723, '#aaa'), ic(746, 'image'), ic(779, 'pie', 23), ic(812, 'textbox', 23), sep(833), ic(852, 'pbreak', 22), ic(884, 'field', 23), dd(907, '#aaa'), ic(930, 'omega', 23), sep(951), ic(971, 'link', 22), ic(1003, 'foot', 22), ic(1037, 'frame', 22), ic(1071, 'bookmark', 22), ic(1103, 'cross', 22), sep(1124), ic(1144, 'comment', 22), ic(1177, 'track', 23), sep(1198), ic(1218, 'line', 23), ic(1250, 'diamond', 22), dd(1272), ic(1295, 'shapes', 23)
], 67)}</div>`);

const arrow = `<svg width="10" height="6"><path d="M0 0h10L5 5.800z" fill="#000"/></svg>`;
def('image-toolbar', `:host{height:39px}.row{height:38px}.combo{box-sizing:border-box;width:98px;height:31px;border:1px solid #a3a19e;border-radius:4px;background:linear-gradient(#fdfdfd,#ebeae8)}.combo .row{height:29px;color:#4c4c4c;font-size:14.5px}
 .spin{box-sizing:border-box;width:105px;height:29px;border:1px solid #a3a19e;border-radius:4px;background:#f2f1f0}.spin .row{height:27px;color:#4c4c4c;font-size:14.5px}`,
  () => `<div class="row">${row([
  handle(71), ic(94, 'anchor', 22), dd(116), sep(127), ic(147, 'wrap0'), ic(180, 'wrap1'), ic(213, 'wrap2'), ic(246, 'wrap3'), sep(267), ic(287, 'al', 23), ic(320, 'ac', 23), ic(353, 'ar', 23), sep(374), ic(394, 'vt'), ic(427, 'vm'), ic(460, 'vb'), sep(481), ic(501, 'z1', 23), ic(534, 'z2'), ic(571, 'z3', 23), ic(604, 'z4', 23), sep(625), ic(644, 'border', 23), dd(666), ic(688, 'lstyle', 23), dd(710), ic(732, 'lcolor'), dd(754), ic(776, 'bg'), dd(798), sep(809), ic(828, 'unlink', 20), ic(863, 'unlink2', 20), handle(911), ic(935, 'wand'), dd(956), sep(967),
  [972, 98, `<div class="combo"><div class="row">${row([txt(978, 1030, 'Default'), [1052, 10, arrow]], 973)}</div></div>`],
  sep(1075), ic(1095, 'crop', 22), sep(1116), ic(1136, 'flipv', 23), ic(1169, 'fliph', 23), ic(1202, 'rotl'), ic(1235, 'rotr'), ic(1267, 'rotf', 22), sep(1289), ic(1302.5, 'transp', 16),
  [1314, 105, `<div class="spin"><div class="row">${row([txt(1316, 1336, '0%'), [1371, 10, '<svg width="10" height="10"><path d="M0 5h10" stroke="#3c3c3c" stroke-width="1.800"/></svg>'], sep(1390, 27, '#b5b3b0'), [1400, 10, '<svg width="10" height="10"><path d="M0 5h10M5 0v10" stroke="#3c3c3c" stroke-width="1.800"/></svg>']], 1315)}</div></div>`],
  sep(1424), ic(1444, 'wheel')
], 67)}</div>`);

/* ---------- document area ---------- */
def('doc-ruler', `:host{height:24px;flex:none;padding-top:3px}svg{display:block}`, () => {
  let t = '';
  for (let x = 581; x < 1362; x += 12) {
    const k = (x - 665) / 12;
    if (k === 0 || x === 1289) continue;
    if (k > 0 && k % 8 === 0) {
      t += `<text x="${x}" y="12" font-size="10.500" text-anchor="middle" fill="#8f9290">${k / 8}</text><path d="M${x + .5} 1v1M${x + .5} 14v2" stroke="#999"/>`;
    } else t += (k % 4 === 0) ? `<path d="M${x + .5} 4v6" stroke="#8f918e"/>` : `<path d="M${x + .5} 6v3" stroke="#9b9d9a"/>`;
  }
  return `<svg width="1799" height="18" viewBox="67 0 1799 18"><rect x="665" y="1" width="624" height="15" fill="#fff"/><path d="M665.500 1.500h-96v14h96z M1289.500 1.500h73v14h-73z" fill="#f2f1f0" stroke="#a3a19e"/>${t}<path d="M76 6v5h6" stroke="#8f918e" stroke-width="2" fill="none"/></svg>`;
});

def('doc-para', `:host{display:flex;font:bold 13.330px/16px "DejaVu Sans",sans-serif;padding-left:49px}.n{width:24px}.l{height:16px;display:flex;white-space:nowrap}:host([mark]) .l{background:#fff200;width:max-content}`,
  function () {
    const ls = JSON.parse(this.getAttribute('lines'));
    return `<div class="n"><fit-text w="15">${this.getAttribute('num')}</fit-text></div><div>${ls.map(([s, w]) => `<div class="l"><fit-text w="${w}">${s}</fit-text></div>`).join('')}</div>`;
  });
const para = (mt, num, color, lines, mark) => `<doc-para num="${num}" ${mark ? 'mark' : ''} style="margin-top:${mt}px;color:${color}" lines='${JSON.stringify(lines)}'></doc-para>`;

// Embedded pictures; each drawing keeps the canvas units of the document view.
const PICS = {
  a: [642, 181, 630, 44, `<rect x="642" y="181" width="629" height="43" fill="#fff"/><rect x="856" y="181" width="6" height="43" fill="#f7f7f7"/>
    <path d="M642.500 181v42.500h628.500v-42.500" fill="none" stroke="#b5b5b5"/>
    <path d="M887.500 181q0 10.500 12 10.500h65q12 0 12-10.500M1217.500 181q0 10.500 10 10.500h31q10 0 10-10.500" fill="none" stroke="#bcd3f2"/>
    <svg x="642" y="181" width="630" height="10" viewBox="642 181 630 10">${T(897, 968, 181.3, 'Добавить новый раздел', 8)}${Q(985, 180.5)}${CB(1157, 180.5)}${T(1163, 1215, 181.3, 'Корректировать', 8)}${T(1226, 1259, 181.3, 'Сохранить', 8)}</svg>
    ${T(892, 1100, 216, 'Характеристика места группы компании на рынке', 9.5, 'font-weight="600"')}
    <path d="M1103 217l7-4-1 6-3-1z" fill="#c9c9c9"/><circle cx="1117.500" cy="216" r="3.300" fill="none" stroke="#a9a9a9"/><path d="M1115 218.500l5-5" stroke="#a9a9a9"/>`],
  b: [642, 312, 383, 168, `<rect x="642.500" y="312.500" width="381.500" height="166.500" fill="#fff" stroke="#b5b5b5"/>
    <g font-weight="600">${T(666, 766, 329, 'Выбор Метода Вручную', 9)}${T(671, 730, 361.7, 'Выбор метода', 9)}${T(864, 994, 361.7, 'Выбор второго метода в случае', 9)}${T(854, 1006, 372, 'использования комбинации методов', 9)}</g>${CB(859, 361)}
    ${R(676, 376.5)}${T(685, 802, 377, 'Метод Сопоставимых Рыночных Цен', 7.6)}${T(670, 807, 385.5, '(анализируются сделки данной компании с', 7.6)}${T(670, 729, 393.5, 'третьими лицами)', 7.6)}${Q(735.5, 393.5)}
    ${R(676, 402.3, 1)}${T(685, 802, 403, 'Метод Сопоставимых Рыночных Цен', 7.6)}${T(670, 761, 411.3, '(анализируются сделки меж', 7.6)}${Q(676, 419)}
    ${R(676, 428)}${T(685, 742, 428.5, 'Затратный Метод', 7.6)}${Q(747, 428.3)}${R(676, 437.5)}${T(685, 762, 438.3, 'Метод Цены Последую', 7.6)}${R(676, 447)}${T(685, 762, 447.7, 'Метод Сопоставимой Р', 7.6)}${R(676, 456.500)}${T(685, 762, 457.3, 'Метод Распределения П', 7.6)}
    ${R(859.5, 387)}${T(868, 986, 387.5, 'Метод Сопоставимых Рыночных Цен', 7.6)}${T(854, 990, 396, '(анализируются сделки данной компании с', 7.6)}${T(854, 912, 404, 'третьими лицами)', 7.6)}${Q(919, 404)}
    ${T(911, 986, 413.7, 'тавимых Рыночных Цен', 7.6)}${T(912, 1010, 422, 'елки между третьими лицами)', 7.6)}${T(911, 925, 439, 'етод', 7.6)}${Q(930, 438.7)}
    ${T(911, 994, 449, 'Последующей Реализации', 7.6)}${Q(1000, 448.7)}${T(911, 990, 458.5, 'тавимой Рентабельности', 7.6)}${Q(997, 458.3)}${R(859.5, 467.5)}${T(868, 970, 468, 'Метод Распределения Прибыли', 7.6)}${Q(976, 467.8)}
    <rect x="762" y="408" width="152" height="63" fill="#999" opacity=".35"/><rect x="760.500" y="406.500" width="151" height="62" fill="#ecebfc" stroke="#cfcfe0" stroke-width=".7"/><rect x="763" y="415.500" width="145.500" height="51" fill="#e5e4fb" stroke="#c9c8de" stroke-width=".7"/>
    <g fill="#33334a">${T(764, 888, 420.3, 'По результатам функционального анализа', 7.6)}${T(764, 865, 428, 'был сделан вывод о возможности', 7.6)}${T(764, 901, 436, 'применения Метода Сопоставимых Рыночных', 7.6)}${T(764, 877, 443.7, 'Цен, так как в сопоставимых условиях', 7.6)}${T(764, 873, 451.500, 'ПРОДАВЕЦ участвует в практически', 7.6)}${T(764, 885, 459.5, 'идентичных сделках с третьими лицами.', 7.6)}</g>
    <path d="M894 414l4-5" stroke="#111" stroke-width="2"/><path d="M902 408v7" stroke="#777" stroke-width=".6"/><path d="M904.500 409.500l4 4m0-4l-4 4" stroke="#333" stroke-width="1.100"/><rect x="900" y="418.500" width="4" height="5" fill="#dde" stroke="#556" stroke-width=".8"/><rect x="902.500" y="420.500" width="4" height="4.500" fill="#dde" stroke="#556" stroke-width=".8"/>
    ${E(675, 1193.5, 353.5, 382.3)}${E(753.5, 922.5, 406, 474)}${E(990.5, 1033.5, 436, 473.3)}`],
  c: [666, 527, 582, 47, `<rect x="666.500" y="527.500" width="580" height="46" fill="#fff" stroke="#b5b5b5"/><rect x="667" y="531" width="533" height="17.500" fill="#eff2fc"/><path d="M685 531v17M857 531v17M1029 531v17" stroke="#fff" opacity=".7"/>
    <path d="M667 569.500h568v3.500H667z" fill="#f3f3f3"/><path d="M1235 528h11.500v45h-11.500z" fill="#f1f1f1"/><rect x="1235" y="528" width="10" height="14" fill="#c1c1c1"/>
    ${T(685, 840, 539.5, 'Версия базы данных - 23 (29-11-2019)', 9)}${T(857, 941, 539.5, '2021-01-13 13:33:56', 9)}
    <circle cx="1166" cy="539.500" r="3.300" fill="none" stroke="#222" stroke-width="1.300"/><path d="M1164 542l4-5" stroke="#222"/><path d="M1173.500 535.500v8M1189.500 535.500v8" stroke="#444" stroke-width=".8"/><path d="M1177 535.500h6.500v6H1177zM1179.500 537.500h6v6h-6z" fill="#eff2fc" stroke="#555" stroke-width=".8"/><path d="M1196.500 535v4M1192.500 542.500h8" stroke="#1e7d35" stroke-width="2"/><path d="M1193.500 538h6l-3 3.500z" fill="#1e7d35"/>
    <rect x="1136" y="547" width="111" height="17" fill="#fff"/><path d="M1136.500 564v-16.500H1246" stroke="#8a8a8a" fill="none"/>${T(1142, 1240, 556, 'Импортировать файл XML', 8.5, 'fill="#666"')}${E(1108, 1254.500, 540, 572.500)}`],
  d: [666, 621, 625, 36, `<rect x="666.500" y="621.500" width="623.500" height="35" fill="#fff" stroke="#b5b5b5"/><rect x="667" y="622" width="623" height="9" fill="#dcdcdc"/><rect x="667" y="622.500" width="6" height="8" fill="#f4f4f4"/><rect x="673" y="623" width="599" height="7" fill="#c0c0c0"/><rect x="1272" y="622.500" width="8" height="8" fill="#f4f4f4"/><path d="M1275 624.500v4l2.500-2z" fill="#333"/><path d="M670.500 624.500v4l-2-2z" fill="#888"/>
    <rect x="667" y="631" width="113.500" height="25" fill="#d2d2d2"/><rect x="675" y="641.500" width="4" height="6" fill="#1f7244"/><rect x="679.500" y="640.500" width="3" height="7.500" fill="#dfe8e2" stroke="#8a9a90" stroke-width=".5"/>
    ${T(689, 756, 645, 'BM Search - отчет....xlsx', 7.2, 'fill="#555"')}<path d="M766.500 645.500l2.200-2.200 2.200 2.200" stroke="#555" fill="none"/>
    <rect x="1219.500" y="636.500" width="51" height="15" rx="1.500" fill="#fff" stroke="#eceef1"/>${T(1227, 1263, 644.3, 'Показать все', 6.8, 'fill="#1a63d8"')}<path d="M1277.500 642l4 4m0-4l-4 4" stroke="#555"/>
    ${E(646.500, 801.500, 611.500, 663)}
    <g fill="#80e52c" stroke="#3f7a12">${[621, 638, 656].map(y => [666, 978, 1290].map(x => y === 638 && x === 978 ? '' : `<rect x="${x - 3.500}" y="${y - 2.500}" width="6" height="6"/>`).join('')).join('')}</g>`],
  e: [666, 728, 375, 70, `<rect x="666.500" y="728.500" width="373" height="69" fill="#fff" stroke="#b5b5b5"/>
    ${T(673, 836, 756, 'Дочерние организации', 15.5)}${Q(854, 755.7, 7)}<rect x="865.500" y="732.500" width="59" height="47.500" rx="4" fill="#fff" stroke="#e0e2e4" stroke-width="1.300"/><rect x="929.500" y="732.500" width="73" height="47.500" rx="4" fill="#fff" stroke="#e0e2e4" stroke-width="1.300"/>
    ${T(877, 896, 756, '&lt;=', 16, 'font-weight="600"')}${T(941, 964, 756.7, '0%', 15)}<path d="M909.500 753.500l4.300 4.500 4.300-4.500M987.500 753.500l4.300 4.500 4.300-4.500" stroke="#222" stroke-width="2" fill="none"/>
    <text x="673" y="781" font-size="14" fill="#3a82e4">:</text>${E(662.500, 695.500, 766.300, 788)}<path d="M695.500 774.800L834 757.300" stroke="#f50b0b" stroke-width="1.300"/><path d="M832 752.500l10 4.300-9.500 4.500z" fill="#f50b0b"/>`],
  f: [666, 953, 212, 70, `<rect x="666.500" y="953.500" width="210.500" height="90" fill="#fff" stroke="#b5b5b5"/><path d="M768 952.500h33" stroke="#cddcf0"/><path d="M674 956.500h203" stroke="#e4e4e4" stroke-dasharray="2 1"/><path d="M674.500 1030v-60.500H877" stroke="#dcdcdc" fill="none"/>
    <g fill="#fff" stroke="#a5a5a5" stroke-width=".9"><rect x="678.500" y="972.500" width="7.500" height="8" rx="1.500"/><rect x="681.500" y="999.500" width="7.500" height="8" rx="1.500"/><rect x="681.500" y="1018.500" width="7.500" height="8" rx="1.500"/></g>
    ${T(743, 853, 976, 'КОД СТРАНЫ ОКСМ (16)', 9, 'font-weight="600"')}${T(743, 775, 1004, 'Австрия', 8.500)}<path d="M743 1019.500h5" stroke="#777"/>${E(705, 871, 964.500, 984)}${E(732, 858, 991.500, 1111.500)}`]
};
def('doc-picture', `:host{flex:none}svg{display:block;overflow:visible;font-family:Lato,"Open Sans",sans-serif}svg svg{overflow:hidden}`, function () {
  const [x, y, w, h, body] = PICS[this.getAttribute('pic')];
  return `<svg width="${w}" height="${h}" viewBox="${x} ${y} ${w} ${h}" fill="#141414">${body}</svg>`;
});
const pic = (k, mt) => `<doc-picture pic="${k}" style="margin-top:${mt}px;margin-left:${PICS[k][0] - 569}px"></doc-picture>`;
const G = '#003a1c', D = '#003b40';
def('doc-page', `:host{width:795px;margin-left:501px;background:#fff;flex:none;border:1px solid #bdbbb9;border-top-width:0;box-shadow:0 2px 6px rgba(0,0,0,.28);position:relative}:host([second]){border-top-width:1px}
 .in{display:flex;flex-direction:column}.m{position:absolute;width:13px;height:14px;box-sizing:border-box;border:0 solid #bcbcbc}`,
  function () {
    const second = this.hasAttribute('second');
    const y = second ? 35 : 656, e = second ? 'border-bottom-width:1px' : 'border-top-width:1px';
    return `<div class="in"><slot></slot></div><div class="m" style="left:35px;top:${y}px;${e};border-right-width:1px"></div><div class="m" style="left:746px;top:${y}px;${e};border-left-width:1px"></div>`;
  });
def('doc-canvas', `:host{height:839px;flex:none;overflow:hidden;display:flex;flex-direction:column}`, () => `
 <doc-page style="height:707px">${pic('a', 0)}
 ${para(32, '2)', G, [['В функциональном анализе около каждого метода есть подсказка, однако при', 622], ['изменении одной подсказки, меняются все подсказки. Исправить, необходимо для', 650], ['каждого метода дать свое описание, как и в старой АСТРА', 460]])}
 ${pic('b', 7)}
 ${para(8, '3)', D, [['При экспорте экономического анализа выгружается файл в формате XML.', 581], ['Необходимо поменять на Excel', 240]])}
 ${pic('c', 7)}
 ${para(8, '4)', '#000', [['При скачивании выгружается старый формат выгрузки. Необходимо поменять на те', 659], ['файлы, которые Лена направляла (в розовом цвете) и с другими названиями', 602]], 1)}
 ${pic('d', 7)}
 ${para(8, '5)', '#000', [['Копии экранов пока не подгружены? Не смогла выгрузить', 455]])}
 ${para(8, '6)', D, [['В эконом анализе Россия разместить двоеточие на одном уровне с параметром', 620], ['«Дочерние организации» и поменять цвет на черный', 413]])}
 ${pic('e', 7)}
 ${para(8, '7)', D, [['В экономическом анализе Европа разместить названия стран в алфавитном порядке.', 665], ['Код страны ОКСМ переименовать в «Страна»', 353]])}
 </doc-page>
 <doc-page second style="height:400px;margin-top:15px">${pic('f', 49)}</doc-page>`);

/* ---------- sidebar with scrollbar and splitter ---------- */
def('side-deck', `:host{display:flex;width:54px;height:861px}
 .sb{width:7px;padding-top:295px}.sb i{display:block;height:90px;background:#f29069}
 .sp{box-sizing:border-box;width:7px;border:1px solid #adabaa;border-bottom-color:#adabaa;padding-top:394px;background:#f6f5f4}.sp i{display:flex;align-items:center;margin:0 -1px;height:73px;background:#95928d}
 .dk{flex:1;border-top:1px solid #adabaa;border-bottom:1px solid #adabaa;display:flex;flex-direction:column;align-items:center;box-shadow:inset 1px 1px #fff}
 .dk hr{width:22px;border:0;border-top:1px solid #dcdad8;margin:7px 0 7px}.dk ui-icon{margin-bottom:11px}.btn{box-sizing:border-box;width:32px;height:32px;border:1px solid #bdbbb8;border-radius:4px;display:flex;justify-content:center;padding-top:3px;margin-top:-3px}`,
  () => `<div class="sb"><i></i></div><div class="sp"><i><svg width="7" height="8"><path d="M1.500 0L6 4 1.500 8z" fill="#f2f1f0"/></svg></i></div>
  <div class="dk"><ui-icon name="side0" size="24" style="margin:7px 0 0"></ui-icon><hr><ui-icon name="wrench" size="23"></ui-icon><ui-icon name="page2" size="22" style="margin-top:2px"></ui-icon><ui-icon name="styles" size="23" style="margin-top:2px"></ui-icon><ui-icon name="gallery" size="23"></ui-icon><div class="btn"><ui-icon name="compass" size="24"></ui-icon></div></div>`);

/* ---------- bottom bars ---------- */
def('find-bar', `:host{height:39px;color:#4c4c4c;font-size:14.500px}.row{height:37px}
 .entry,.combo{box-sizing:border-box;border:1px solid #a3a19e;border-radius:4px;display:flex}.entry{width:246px;height:27px;background:#fff}.entry .row{height:25px}.ar{box-sizing:border-box;background:linear-gradient(#fdfdfd,#ebeae8);width:25px;height:25px;display:flex;align-items:center;justify-content:center;border-left:1px solid #a3a19e;border-radius:0 3px 3px 0}
 .combo{width:148px;height:31px;background:linear-gradient(#fdfdfd,#ebeae8)}.combo .row{height:29px}.cb{box-sizing:border-box;width:14px;height:14px;border:1px solid #a3a19e;border-radius:3px;background:#fff}`,
  () => `<div class="row">${row([handle(71), ic(95, 'closex', 18),
    [113, 246, `<div class="entry"><div class="row">${row([txt(120, 149, 'Find', 'color:#8c8c8c'), [334, 24, `<div class="ar">${arrow}</div>`]], 114)}</div></div>`],
    ic(378, 'navupg', 22), ic(411, 'navdng', 22), txt(431, 471, 'Find All', 'color:#8c8c8c;font-size:13px'),
    [482, 14, '<div class="cb"></div>'], txt(504, 581, 'Match Case'), sep(588), ic(608, 'find', 23), sep(629),
    [634, 148, `<div class="combo"><div class="row">${row([ic(647, 'page', 20), txt(662, 696, 'Page'), [764, 10, arrow]], 635)}</div></div>`],
    ic(799, 'navup', 22), ic(832, 'navdn', 22), sep(854)], 67)}</div>`);
const ss = x => sep(x, 16, '#9a9895');
def('status-bar', `:host{height:21px;border-top:1px solid #adabaa;color:#4c4c4c;font-size:12.500px;background:#f2f1f0}.row{height:21px}svg{display:block;overflow:visible}`,
  () => `<div class="row">${row([txt(77, 139, 'Page 3 of 7'), ss(315), txt(324, 479, '474 words, 3,223 characters'), ss(696), txt(705, 777, 'Default Style'), ss(961), ss(1195), ss(1263),
   [1273, 12, '<svg width="12" height="10"><path d="M0 2h8v7H0z" fill="#8b8b8b"/><path d="M10.500 0v10M9 0h3M9 10h3" stroke="#8b8b8b"/></svg>'], ss(1292),
   [1303, 11, '<svg width="11" height="12"><path d="M9 2V.5H.5v10H9V9" fill="none" stroke="#999"/><path d="M8.500 2.500v6M6 4l5 3M11 4L6 7" stroke="#b3202e" stroke-width="1.300"/></svg>'], ss(1321), ss(1350),
   [1361, 14, '<svg width="14" height="12"><path d="M0 3.500h10M3.500 0v6" stroke="#1414c8" stroke-dasharray="2 1"/><path d="M4.500 4.500h9v7h-9z" fill="none" stroke="#333" stroke-dasharray="1 1"/></svg>'], txt(1381, 1440, '0.50 / 0.08'),
   [1509, 14, '<svg width="14" height="12"><path d="M4.500 3.500h9v8h-9z" fill="none" stroke="#333" stroke-dasharray="1 1"/><path d="M5 .5h3M10 .5h3M.5 4v3M.5 9v2.500M6 0v3M12 0v3" stroke="#222"/></svg>'], txt(1529, 1588, '6.50 x 0.37'), ss(1652),
   [1665, 8, '<svg width="8" height="10"><path d="M.5.500h4l2.500 3v6.500H.5z M4.500.5v3H7" fill="none" stroke="#444" stroke-width="1.200"/></svg>'],
   [1679, 18, '<svg width="18" height="10"><path d="M.5.500h4l2.500 3v6.500H.5zM4.500.5v3H7M10.500.500h4l2.500 3v6.500h-6.500zM14.500.5v3H17" fill="none" stroke="#8d8d8d"/></svg>'],
   [1703, 17, '<svg width="17" height="10"><path d="M8.500.500h4l3.500 3v6.500H8.500zM8.500.500h-4L1 3.500v6.500h7.500zM12.500.5v3H16M4.500.5v3H1" fill="none" stroke="#8d8d8d"/></svg>'], ss(1728),
   [1739, 8, '<svg width="8" height="8"><path d="M0 4h8" stroke="#8b8b8b" stroke-width="2"/></svg>'],
   [1753, 97, '<svg width="97" height="12"><path d="M0 6h97" stroke="#a9a8a6" stroke-width="2"/><path d="M31 1v10" stroke="#a9a8a6" stroke-width="1.500"/><circle cx="48" cy="6" r="3.800" fill="#fff" stroke="#8b8b8b" stroke-width="1.200"/></svg>'],
   [1856, 8, '<svg width="8" height="8"><path d="M0 4h8M4 0v8" stroke="#8b8b8b" stroke-width="2"/></svg>'], ss(1871), txt(1880, 1910, '100%')], 67)}</div>`);
</script>
</body>
</html>
